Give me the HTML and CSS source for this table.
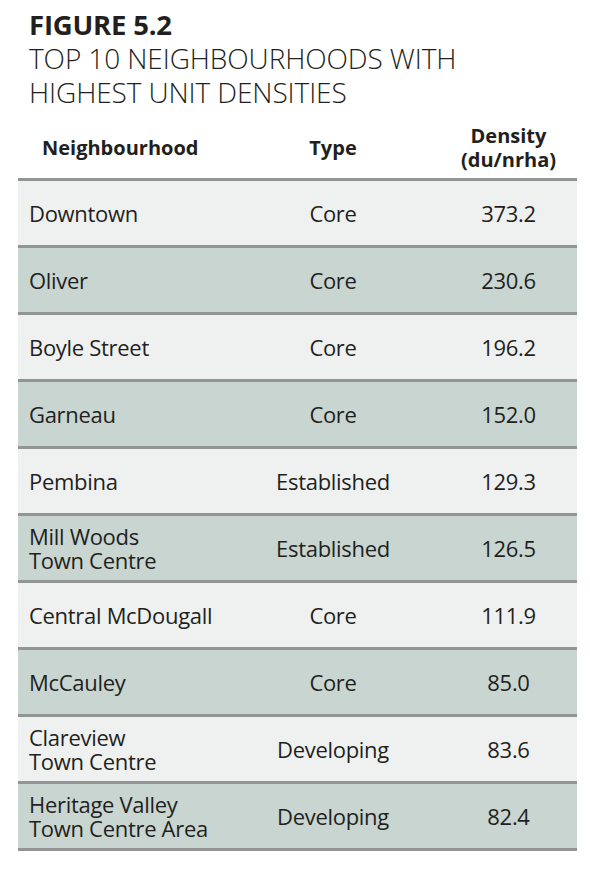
FILE: index.html
```html
<!DOCTYPE html>
<html>
<head>
<meta charset="utf-8">
<link rel="stylesheet" href="styles.css">
</head>
<body>
<div class="figure">
  <div class="title">
    <div class="fig-num">FIGURE 5.2</div>
    <div class="fig-caption">TOP 10 NEIGHBOURHOODS WITH<br>HIGHEST UNIT DENSITIES</div>
  </div>
  <table class="data">
    <colgroup>
      <col class="col-name">
      <col class="col-type">
      <col class="col-dens">
    </colgroup>
    <thead>
      <tr>
        <th class="c-name">Neighbourhood</th>
        <th class="c-type">Type</th>
        <th class="c-dens">Density<br>(du/nrha)</th>
      </tr>
    </thead>
    <tbody>
      <tr class="light"><td class="c-name">Downtown</td><td class="c-type">Core</td><td class="c-dens">373.2</td></tr>
      <tr class="dark"><td class="c-name">Oliver</td><td class="c-type">Core</td><td class="c-dens">230.6</td></tr>
      <tr class="light"><td class="c-name">Boyle Street</td><td class="c-type">Core</td><td class="c-dens">196.2</td></tr>
      <tr class="dark"><td class="c-name">Garneau</td><td class="c-type">Core</td><td class="c-dens">152.0</td></tr>
      <tr class="light"><td class="c-name">Pembina</td><td class="c-type">Established</td><td class="c-dens">129.3</td></tr>
      <tr class="dark"><td class="c-name">Mill Woods<br>Town Centre</td><td class="c-type">Established</td><td class="c-dens">126.5</td></tr>
      <tr class="light"><td class="c-name">Central McDougall</td><td class="c-type">Core</td><td class="c-dens">111.9</td></tr>
      <tr class="dark"><td class="c-name">McCauley</td><td class="c-type">Core</td><td class="c-dens">85.0</td></tr>
      <tr class="light"><td class="c-name">Clareview<br>Town Centre</td><td class="c-type">Developing</td><td class="c-dens">83.6</td></tr>
      <tr class="dark"><td class="c-name">Heritage Valley<br>Town Centre Area</td><td class="c-type">Developing</td><td class="c-dens">82.4</td></tr>
    </tbody>
  </table>
</div>
</body>
</html>
```

FILE: styles.css
```css
html, body {
  margin: 0;
  padding: 0;
  background: #ffffff;
}
body {
  font-family: "Open Sans", "Liberation Sans", sans-serif;
  color: #231f20;
}
.figure {
  width: 559px;
  margin-left: 18px;
  padding-top: 8px;
}
.title {
  padding-left: 11px;
}
.fig-num {
  font-weight: 700;
  font-size: 27.5px;
  line-height: 33px;
  letter-spacing: -0.2px;
}
.fig-caption {
  font-weight: 300;
  font-size: 28px;
  line-height: 34px;
  letter-spacing: -0.1px;
}
.data {
  width: 559px;
  border-collapse: collapse;
  table-layout: fixed;
  margin-top: 9px;
}
.col-name {
  width: 208px;
}
.col-type {
  width: 214px;
}
.col-dens {
  width: 137px;
}
.data th {
  font-weight: 700;
  font-size: 20px;
  line-height: 24px;
  height: 60px;
  padding: 0;
  vertical-align: middle;
  border-bottom: 3px solid #929496;
}
.data td {
  font-size: 22px;
  line-height: 24px;
  height: 64px;
  padding: 0;
  vertical-align: middle;
  border-bottom: 3px solid #929496;
  letter-spacing: -0.3px;
}
.c-name {
  text-align: left;
}
.data td.c-name {
  padding-left: 11px;
}
.data th.c-name {
  padding-left: 24px;
}
.c-type {
  text-align: center;
}
.c-dens {
  text-align: center;
}
.light {
  background: #eff1f0;
}
.dark {
  background: #c8d5d1;
}
```
